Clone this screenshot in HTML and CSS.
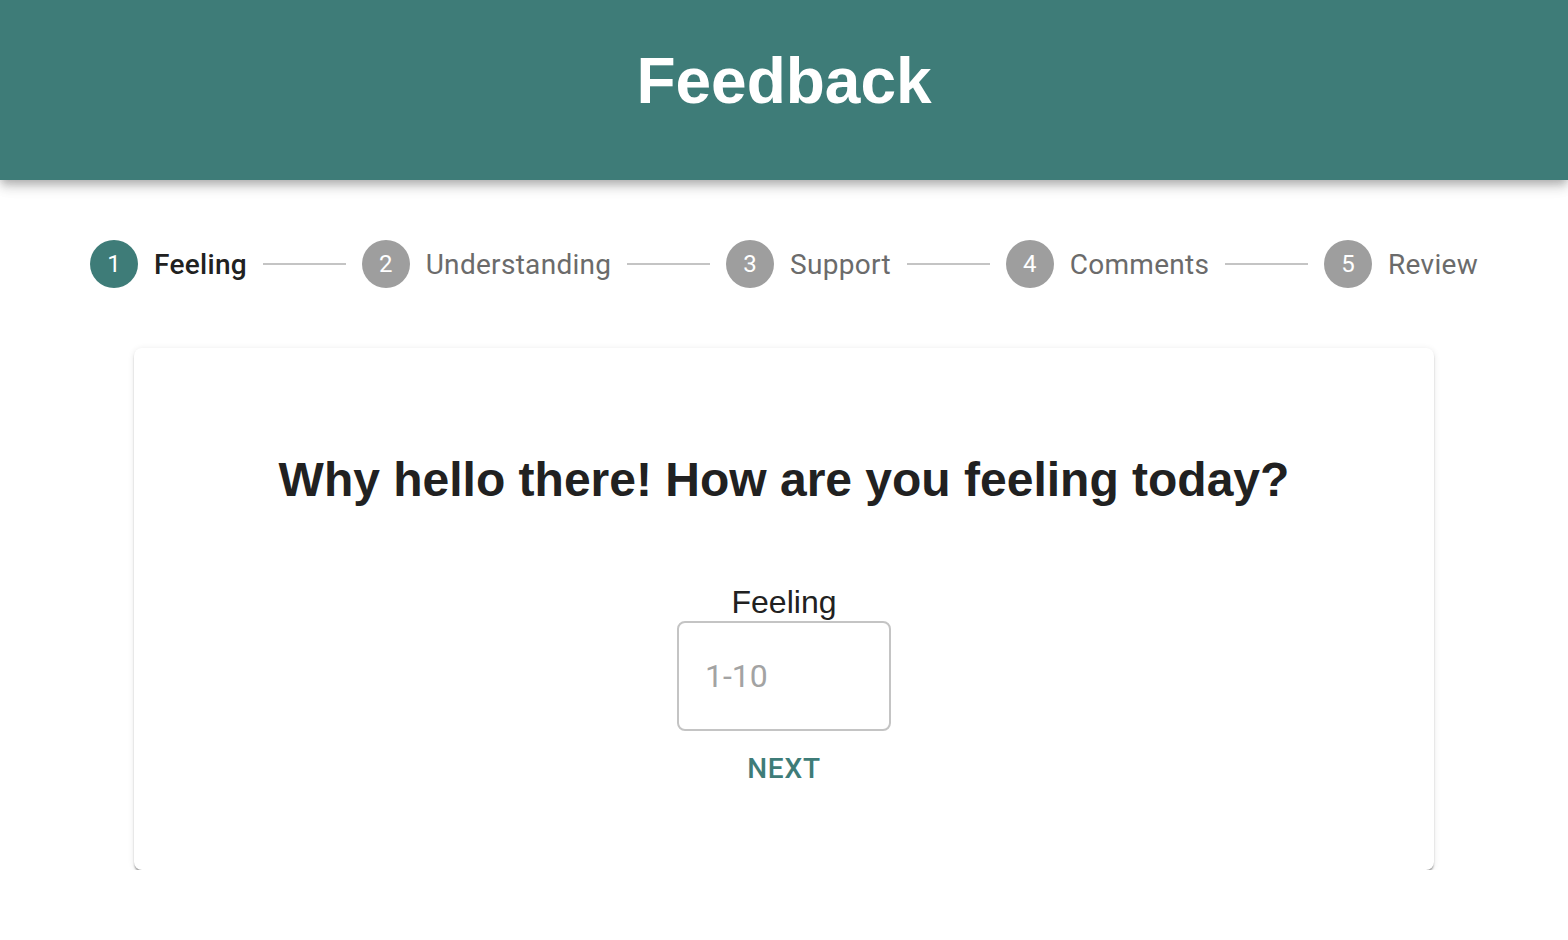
FILE: index.html
```html
<!DOCTYPE html>
<html lang="en">
<head>
<meta charset="utf-8">
<title>Feedback</title>
<link rel="stylesheet" href="styles.css">
</head>
<body>
<header class="appbar">
  <h1 class="appbar-title">Feedback</h1>
</header>
<nav class="stepper">
  <div class="step active"><span class="step-icon">1</span><span class="step-label">Feeling</span></div>
  <div class="connector"></div>
  <div class="step"><span class="step-icon">2</span><span class="step-label">Understanding</span></div>
  <div class="connector"></div>
  <div class="step"><span class="step-icon">3</span><span class="step-label">Support</span></div>
  <div class="connector"></div>
  <div class="step"><span class="step-icon">4</span><span class="step-label">Comments</span></div>
  <div class="connector"></div>
  <div class="step"><span class="step-icon">5</span><span class="step-label">Review</span></div>
</nav>
<main class="card">
  <h2 class="question">Why hello there! How are you feeling today?</h2>
  <label class="field-label" for="feeling">Feeling</label>
  <input class="field-input" id="feeling" type="text" placeholder="1-10">
  <button class="next-btn" type="button">Next</button>
</main>
</body>
</html>
```
FILE: styles.css
```css
* { box-sizing: border-box; }
html, body { margin: 0; padding: 0; background: #ffffff; }
body { font-family: "Liberation Sans", Arial, sans-serif; color: #212121; }

.appbar {
  height: 180px;
  background: #3e7c78;
  padding-top: 49px;
  box-shadow: 0 4px 8px -2px rgba(0,0,0,0.2), 0 8px 10px 0 rgba(0,0,0,0.12), 0 2px 18px 0 rgba(0,0,0,0.1);
  position: relative;
  z-index: 1;
}
.appbar-title {
  margin: 0;
  text-align: center;
  color: #ffffff;
  font-family: "Liberation Sans", Arial, sans-serif;
  font-weight: 700;
  font-size: 64px;
  line-height: 64px;
}

.stepper {
  display: flex;
  align-items: center;
  padding: 0 90px;
  margin-top: 60px;
  height: 48px;
  font-family: Roboto, "Liberation Sans", sans-serif;
}
.step { display: flex; align-items: center; }
.step-icon {
  width: 48px;
  height: 48px;
  border-radius: 50%;
  background: #9e9e9e;
  color: #ffffff;
  display: flex;
  align-items: center;
  justify-content: center;
  font-size: 24px;
  margin-right: 16px;
}
.step-label {
  font-size: 28px;
  color: #6b6b6b;
  font-weight: 400;
  letter-spacing: 0.3px;
}
.step.active .step-icon { background: #3e7c78; }
.step.active .step-label { color: #212121; font-weight: 500; }
.connector {
  flex: 1;
  height: 2px;
  background: #c4c4c4;
  margin: 0 16px;
}

.card {
  width: 1300px;
  margin: 60px auto 0;
  padding: 104px 0 77px;
  border-radius: 8px;
  background: #ffffff;
  box-shadow: 0 3px 2px -1px rgba(0,0,0,0.28), 0 2px 2px 0 rgba(0,0,0,0.14), 0 1px 6px 0 rgba(0,0,0,0.1);
  display: flex;
  flex-direction: column;
  align-items: center;
}
.question {
  margin: 0;
  font-family: "Liberation Sans", Arial, sans-serif;
  font-weight: 700;
  font-size: 48px;
  line-height: 56px;
  color: #212121;
  text-align: center;
}
.field-label {
  margin-top: 76px;
  font-size: 32px;
  line-height: 36px;
  color: #212121;
}
.field-input {
  margin-top: 1px;
  width: 214px;
  height: 110px;
  border: 2px solid #c4c4c4;
  border-radius: 8px;
  padding: 0 26px;
  font-family: Roboto, "Liberation Sans", sans-serif;
  font-size: 32px;
  color: #212121;
  outline: none;
}
.field-input::placeholder { color: #a3a3a3; }
.next-btn {
  margin-top: 13px;
  background: none;
  border: none;
  padding: 0 16px;
  font-family: Roboto, "Liberation Sans", sans-serif;
  font-weight: 500;
  font-size: 28px;
  line-height: 49px;
  letter-spacing: 0.8px;
  text-transform: uppercase;
  color: #3e7c78;
  cursor: pointer;
}
```
